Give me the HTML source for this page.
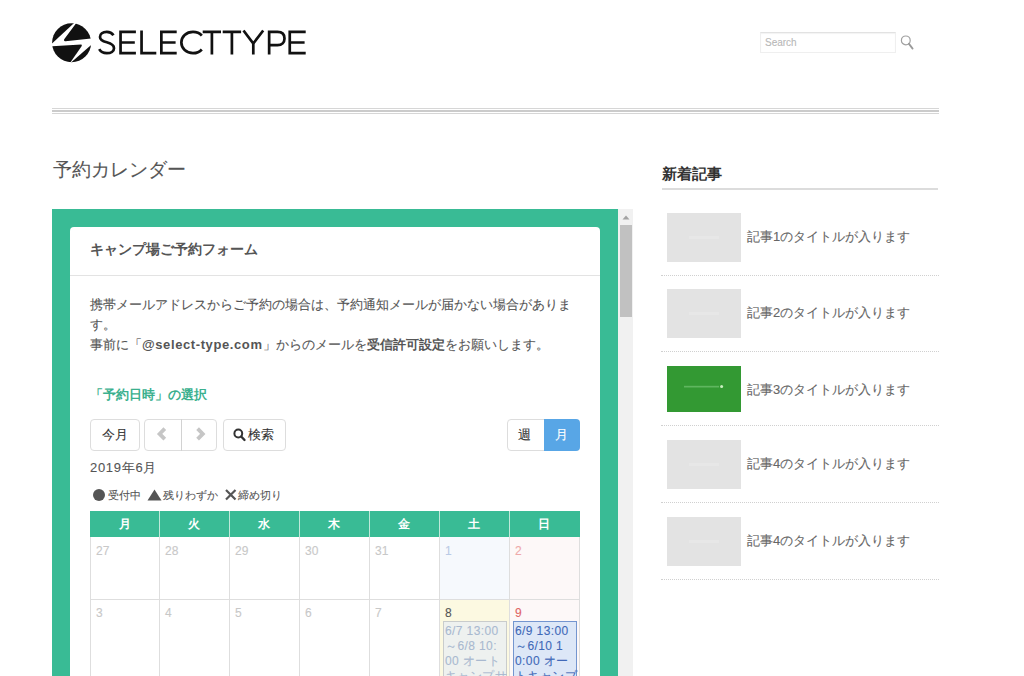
<!DOCTYPE html>
<html><head><meta charset="utf-8">
<style>
*{margin:0;padding:0;box-sizing:border-box}
html,body{width:1024px;height:676px;overflow:hidden;background:#fff}
body{position:relative;-webkit-text-stroke:0.1px currentColor;font-family:"Liberation Sans",sans-serif;color:#555}
.abs{position:absolute}
.t{position:absolute;white-space:nowrap;line-height:1}
b,[style*="bold"]{-webkit-text-stroke:0}
</style></head><body>
<!-- logo -->
<svg class="abs" style="left:0;top:0" width="320" height="70" viewBox="0 0 320 70">
  <defs><clipPath id="cc"><circle cx="71.6" cy="42.7" r="19.5"/></clipPath></defs>
  <g clip-path="url(#cc)" fill="#111">
    <polygon points="40,18 79.5,18 52.3,43.3 40,43.3"/>
    <path d="M80,18 L100,18 L100,38.6 L91,38.6 L65.5,41.2 Q63.5,41.3 64.2,39.3 Z"/>
    <path d="M40,46.8 L81.4,44.6 Q82.2,45.4 81.4,46.6 L70.7,62 L40,70 Z"/>
    <polygon points="100,37.3 100,70 62.4,70"/>
  </g>
  <g fill="none" stroke="#111" stroke-width="2.7" stroke-linejoin="miter">
    <path d="M113.5,35.2 C112,33 109.8,31.9 106.8,31.9 C102.6,31.9 100,34 100,37 C100,40.3 103,41.3 106.8,42.3 C111,43.4 114,44.8 114,48.2 C114,51.3 111,53.2 106.8,53.2 C103.2,53.2 100.6,51.7 99.2,49.2"/>
    <path d="M135.9,31.9 H120.55 V53.2 H135.9 M120.55,42.5 H134.8"/>
    <path d="M141.55,30.5 V53.2 H156.3"/>
    <path d="M176.7,31.9 H161.35 V53.2 H176.7 M161.35,42.5 H175.6"/>
    <path d="M201.8,35.6 C199.7,33.2 196.6,31.9 193,31.9 C186.3,31.9 181.35,36.7 181.35,42.55 C181.35,48.4 186.3,53.2 193,53.2 C196.6,53.2 199.7,51.9 201.8,49.5"/>
    <path d="M202.7,31.9 H221 M211.9,31.9 V54.6"/>
    <path d="M222.7,31.9 H241.1 M231.9,31.9 V54.6"/>
    <path d="M243.5,30.5 L253.3,43.5 L263.2,30.5 M253.3,43.5 V54.6"/>
    <path d="M269.15,54.6 V31.9 H277.5 C282,31.9 284.5,34.5 284.5,38.5 C284.5,42.5 282,45.2 277.5,45.2 H269.15"/>
    <path d="M305.7,31.9 H289.75 V53.2 H305.7 M289.75,42.5 H304.6"/>
  </g>
</svg>
<!-- search -->
<div class="abs" style="left:760px;top:32px;width:136px;height:21px;border:1px solid #efefef;border-top-color:#e2e2e2;box-shadow:inset 0 1px 1px rgba(0,0,0,.05)"></div>
<div class="t" style="left:765px;top:38px;font-size:10px;color:#b8b8b8">Search</div>
<svg class="abs" style="left:898px;top:33px" width="20" height="20" viewBox="0 0 20 20">
  <circle cx="7.8" cy="7.4" r="4.4" fill="none" stroke="#a0a0a0" stroke-width="1.2"/>
  <line x1="10.8" y1="10.6" x2="14.6" y2="15.6" stroke="#9a9a9a" stroke-width="1.8" stroke-linecap="round"/>
</svg>
<!-- header rule -->
<div class="abs" style="left:52px;top:108px;width:887px;height:1px;background:#d6d6d6"></div>
<div class="abs" style="left:52px;top:110px;width:887px;height:2px;background:#cbcbcb"></div>
<div class="abs" style="left:52px;top:113px;width:887px;height:1px;background:#d6d6d6"></div>

<!-- page title -->
<div class="t" style="left:53px;top:160px;font-size:19px;color:#555">予約カレンダー</div>

<!-- green frame -->
<div class="abs" style="left:52px;top:209px;width:566px;height:467px;background:#39bb95"></div>
<!-- scrollbar -->
<div class="abs" style="left:618px;top:209px;width:15px;height:467px;background:#f1f1f1"></div>
<svg class="abs" style="left:618px;top:209px" width="16" height="16"><polygon points="4.5,10.5 11.5,10.5 8,6.5" fill="#a3a3a3"/></svg>
<div class="abs" style="left:620px;top:225px;width:12px;height:92px;background:#c1c1c1"></div>

<!-- card -->
<div class="abs" style="left:70px;top:227px;width:530px;height:460px;background:#fff;border-radius:4px"></div>
<div class="t" style="left:90px;top:242px;font-size:14px;font-weight:bold;color:#555">キャンプ場ご予約フォーム</div>
<div class="abs" style="left:70px;top:275px;width:530px;height:1px;background:#e3e3e3"></div>

<div class="abs" style="left:90px;top:295px;width:500px;font-size:13px;line-height:20px;color:#555;white-space:nowrap">携帯メールアドレスからご予約の場合は、予約通知メールが届かない場合がありま<br>す。<br>事前に「<b style="letter-spacing:0.6px">@select-type.com</b>」からのメールを<b>受信許可設定</b>をお願いします。</div>

<div class="t" style="left:90px;top:388px;font-size:13px;font-weight:bold;color:#3bb08e">「予約日時」の選択</div>

<!-- buttons -->
<div class="abs" style="left:90px;top:419px;width:50px;height:32px;border:1px solid #ddd;border-radius:4px"></div>
<div class="t" style="left:102px;top:428px;font-size:13px;color:#333">今月</div>
<div class="abs" style="left:144px;top:419px;width:73px;height:32px;border:1px solid #ddd;border-radius:4px"></div>
<div class="abs" style="left:181px;top:419px;width:1px;height:32px;background:#d2d2d2"></div>
<svg class="abs" style="left:144px;top:419px" width="73" height="32" viewBox="0 0 73 32">
  <path d="M20.8,9.6 L15.6,14.9 L20.8,20.2" fill="none" stroke="#c6c6c6" stroke-width="3.8" stroke-linejoin="miter"/>
  <path d="M53.6,9.6 L58.8,14.9 L53.6,20.2" fill="none" stroke="#c6c6c6" stroke-width="3.8" stroke-linejoin="miter"/>
</svg>
<div class="abs" style="left:223px;top:419px;width:63px;height:32px;border:1px solid #ddd;border-radius:4px"></div>
<svg class="abs" style="left:223px;top:419px" width="30" height="32" viewBox="0 0 30 32">
  <circle cx="15.3" cy="14.5" r="3.9" fill="none" stroke="#333" stroke-width="2"/>
  <line x1="18.2" y1="17.5" x2="21.5" y2="21" stroke="#333" stroke-width="2.4" stroke-linecap="round"/>
</svg>
<div class="t" style="left:248px;top:428px;font-size:13px;color:#333">検索</div>

<div class="abs" style="left:507px;top:419px;width:40px;height:32px;border:1px solid #ddd;border-radius:4px 0 0 4px"></div>
<div class="abs" style="left:544px;top:419px;width:36px;height:32px;background:#58a6e6;border-radius:0 4px 4px 0"></div>
<div class="t" style="left:518px;top:428px;font-size:13px;color:#333">週</div>
<div class="t" style="left:555px;top:428px;font-size:13px;color:#fff">月</div>

<div class="t" style="left:90px;top:461px;font-size:13px;color:#555;letter-spacing:0.7px">2019年6月</div>

<!-- legend -->
<div class="abs" style="left:93px;top:489px;width:12px;height:12px;border-radius:50%;background:#555"></div>
<div class="t" style="left:108px;top:490px;font-size:11px;color:#555">受付中</div>
<svg class="abs" style="left:146px;top:488px" width="18" height="14"><polygon points="1.5,12.5 15.5,12.5 8.5,1.5" fill="#555"/></svg>
<div class="t" style="left:163px;top:490px;font-size:11px;color:#555">残りわずか</div>
<svg class="abs" style="left:224px;top:488px" width="14" height="14"><path d="M2,2 L11.5,11.5 M11.5,2 L2,11.5" stroke="#555" stroke-width="2.2"/></svg>
<div class="t" style="left:238px;top:490px;font-size:11px;color:#555">締め切り</div>

<!-- calendar -->
<div class="abs" style="left:90px;top:511px;width:490px;height:26px;background:#39bb95"></div>
<div class="abs" style="left:440px;top:537px;width:69px;height:62px;background:#f6f9fd"></div>
<div class="abs" style="left:510px;top:537px;width:69px;height:62px;background:#fdf8f8"></div>
<div class="abs" style="left:440px;top:600px;width:69px;height:80px;background:#fcf9e1"></div>
<div class="abs" style="left:510px;top:600px;width:69px;height:80px;background:#fdf8f8"></div>
<div class="abs" style="left:90px;top:537px;width:1px;height:150px;background:#dedede"></div>
<div class="abs" style="left:159px;top:511px;width:1px;height:26px;background:#bfe9da"></div>
<div class="abs" style="left:159px;top:537px;width:1px;height:150px;background:#dedede"></div>
<div class="abs" style="left:229px;top:511px;width:1px;height:26px;background:#bfe9da"></div>
<div class="abs" style="left:229px;top:537px;width:1px;height:150px;background:#dedede"></div>
<div class="abs" style="left:299px;top:511px;width:1px;height:26px;background:#bfe9da"></div>
<div class="abs" style="left:299px;top:537px;width:1px;height:150px;background:#dedede"></div>
<div class="abs" style="left:369px;top:511px;width:1px;height:26px;background:#bfe9da"></div>
<div class="abs" style="left:369px;top:537px;width:1px;height:150px;background:#dedede"></div>
<div class="abs" style="left:439px;top:511px;width:1px;height:26px;background:#bfe9da"></div>
<div class="abs" style="left:439px;top:537px;width:1px;height:150px;background:#dedede"></div>
<div class="abs" style="left:509px;top:511px;width:1px;height:26px;background:#bfe9da"></div>
<div class="abs" style="left:509px;top:537px;width:1px;height:150px;background:#dedede"></div>
<div class="abs" style="left:579px;top:537px;width:1px;height:150px;background:#dedede"></div>
<div class="abs" style="left:90px;top:599px;width:490px;height:1px;background:#dedede"></div>
<div class="t" style="left:90px;width:69px;text-align:center;top:518px;font-size:12px;font-weight:bold;color:#fff">月</div>
<div class="t" style="left:159px;width:70px;text-align:center;top:518px;font-size:12px;font-weight:bold;color:#fff">火</div>
<div class="t" style="left:229px;width:70px;text-align:center;top:518px;font-size:12px;font-weight:bold;color:#fff">水</div>
<div class="t" style="left:299px;width:70px;text-align:center;top:518px;font-size:12px;font-weight:bold;color:#fff">木</div>
<div class="t" style="left:369px;width:70px;text-align:center;top:518px;font-size:12px;font-weight:bold;color:#fff">金</div>
<div class="t" style="left:439px;width:70px;text-align:center;top:518px;font-size:12px;font-weight:bold;color:#fff">土</div>
<div class="t" style="left:509px;width:70px;text-align:center;top:518px;font-size:12px;font-weight:bold;color:#fff">日</div>
<div class="t" style="left:96px;top:545px;font-size:12px;color:#c8c8c8">27</div>
<div class="t" style="left:165px;top:545px;font-size:12px;color:#c8c8c8">28</div>
<div class="t" style="left:235px;top:545px;font-size:12px;color:#c8c8c8">29</div>
<div class="t" style="left:305px;top:545px;font-size:12px;color:#c8c8c8">30</div>
<div class="t" style="left:375px;top:545px;font-size:12px;color:#c8c8c8">31</div>
<div class="t" style="left:445px;top:545px;font-size:12px;color:#b9cbe6">1</div>
<div class="t" style="left:515px;top:545px;font-size:12px;color:#efa9a9">2</div>
<div class="t" style="left:96px;top:607px;font-size:12px;color:#c8c8c8">3</div>
<div class="t" style="left:165px;top:607px;font-size:12px;color:#c8c8c8">4</div>
<div class="t" style="left:235px;top:607px;font-size:12px;color:#c8c8c8">5</div>
<div class="t" style="left:305px;top:607px;font-size:12px;color:#c8c8c8">6</div>
<div class="t" style="left:375px;top:607px;font-size:12px;color:#c8c8c8">7</div>
<div class="t" style="left:445px;top:607px;font-size:12px;color:#555">8</div>
<div class="t" style="left:515px;top:607px;font-size:12px;color:#e06666">9</div>
<div class="abs" style="left:443px;top:621px;width:64px;height:70px;background:#eef1ef;border:1px solid #c9cccc"></div>
<div class="abs" style="left:445px;top:624px;font-size:12px;line-height:15px;color:#a9b9cf;white-space:nowrap;letter-spacing:0.4px">6/7 13:00<br>～6/8 10:<br>00 オート<br>キャンプサ</div>
<div class="abs" style="left:513px;top:621px;width:64px;height:70px;background:#dde7f7;border:1px solid #7495cf"></div>
<div class="abs" style="left:515px;top:624px;font-size:12px;line-height:15px;color:#4169b8;white-space:nowrap;letter-spacing:0.4px">6/9 13:00<br>～6/10 1<br>0:00 オー<br>トキャンプ</div>
<div class="t" style="left:662px;top:166px;font-size:15px;font-weight:bold;color:#333">新着記事</div>
<div class="abs" style="left:662px;top:188px;width:276px;height:2px;background:#dcdcdc"></div>
<div class="abs" style="left:667px;top:213px;width:74px;height:49px;background:#e3e3e3"></div><div class="abs" style="left:689px;top:236px;width:30px;height:3px;background:#e7e7e7"></div>
<div class="t" style="left:747px;top:230.0px;font-size:13px;color:#666">記事1のタイトルが入ります</div>
<div class="abs" style="left:661px;top:275px;width:278px;height:1px;border-top:1px dotted #d0d0d0"></div>
<div class="abs" style="left:667px;top:289px;width:74px;height:49px;background:#e3e3e3"></div><div class="abs" style="left:689px;top:312px;width:30px;height:3px;background:#e7e7e7"></div>
<div class="t" style="left:747px;top:306.0px;font-size:13px;color:#666">記事2のタイトルが入ります</div>
<div class="abs" style="left:661px;top:351px;width:278px;height:1px;border-top:1px dotted #d0d0d0"></div>
<div class="abs" style="left:667px;top:366px;width:74px;height:46px;background:#339933"></div>
<div class="t" style="left:747px;top:383.0px;font-size:13px;color:#666">記事3のタイトルが入ります</div>
<div class="abs" style="left:661px;top:425px;width:278px;height:1px;border-top:1px dotted #d0d0d0"></div>
<div class="abs" style="left:667px;top:440px;width:74px;height:49px;background:#e3e3e3"></div><div class="abs" style="left:689px;top:463px;width:30px;height:3px;background:#e7e7e7"></div>
<div class="t" style="left:747px;top:457.0px;font-size:13px;color:#666">記事4のタイトルが入ります</div>
<div class="abs" style="left:661px;top:502px;width:278px;height:1px;border-top:1px dotted #d0d0d0"></div>
<div class="abs" style="left:667px;top:517px;width:74px;height:49px;background:#e3e3e3"></div><div class="abs" style="left:689px;top:540px;width:30px;height:3px;background:#e7e7e7"></div>
<div class="t" style="left:747px;top:534.0px;font-size:13px;color:#666">記事4のタイトルが入ります</div>
<div class="abs" style="left:661px;top:579px;width:278px;height:1px;border-top:1px dotted #d0d0d0"></div>
<svg class="abs" style="left:683px;top:384px" width="44" height="6"><rect x="1" y="1.8" width="35" height="1.7" fill="#5fb65f"/><circle cx="38.6" cy="2.6" r="1.5" fill="#c8efc0"/></svg>
</body></html>
